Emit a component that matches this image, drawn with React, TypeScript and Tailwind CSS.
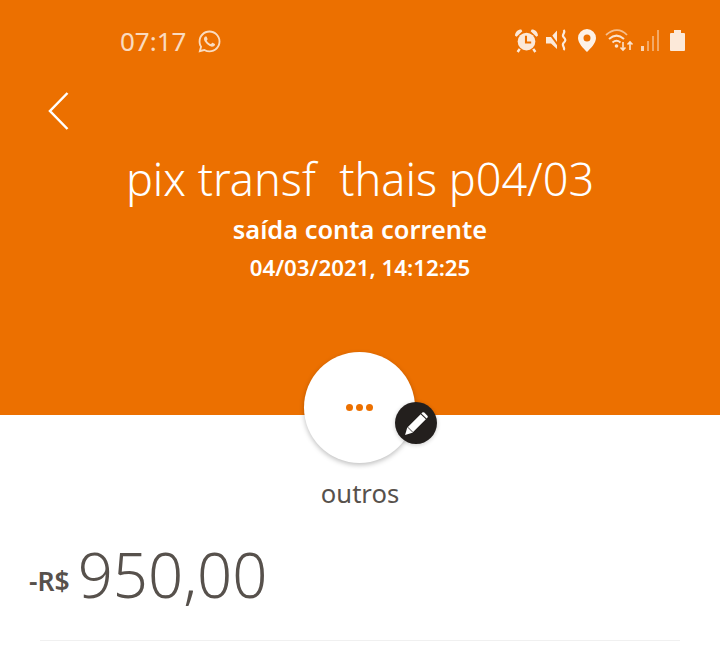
import { FaWhatsapp } from "react-icons/fa";

function StatusIcons() {
  return (
    <div className="mb-[2px] flex items-center">
      {/* alarm */}
      <svg width="25" height="25" viewBox="0 0 24 24" className="opacity-85">
        <circle cx="12" cy="13" r="8.500" fill="#fff" />
        <path d="M1 7.500C1 4 3.500 1.500 7 1.500l1 1.500-5.500 5.500zM23 7.500C23 4 20.500 1.500 17 1.500l-1 1.500 5.500 5.500z" fill="#fff" />
        <path d="M5.500 20l-2 3M18.500 20l2 3" stroke="#fff" strokeWidth="2.400" />
        <path d="M11.500 7.500v6.500h5" stroke="#ec7000" strokeWidth="2" fill="none" />
      </svg>
      {/* vibrate / mute */}
      <svg width="24" height="24" viewBox="0 0 24 24" className="ml-[6px] opacity-85">
        <path d="M1 9h5l6-6.500V21l-6-5.500H1z" fill="#fff" />
        <path d="M2 2l14 19" stroke="#ec7000" strokeWidth="2" />
        <path d="M18.500 2c3 2.500-2.500 4.500 0 7s2.500 3.500 0 6 2.500 5 0 7" stroke="#fff" strokeWidth="2.200" fill="none" />
      </svg>
      {/* location */}
      <svg width="18" height="23" viewBox="0 0 18 23" className="ml-[9px] opacity-90">
        <path fillRule="evenodd" fill="#fff" d="M9 0a9 9 0 0 1 9 9c0 5-5 10-9 14C5 19 0 14 0 9a9 9 0 0 1 9-9zm0 5.500a3.500 3.500 0 1 0 0 7 3.500 3.500 0 0 0 0-7z" />
      </svg>
      {/* wifi with arrows */}
      <svg width="29" height="24" viewBox="0 0 29 24" fill="none" className="ml-[9px]">
        <path d="M1 7c7-6.500 15-6.500 21 0" stroke="#fff" strokeWidth="1.800" opacity="0.55" />
        <path d="M4 11c5-4.500 10-4.500 15 0M7.500 14.500c3-2.500 5-2.500 8 0" stroke="#fff" strokeWidth="2" opacity="0.8" />
        <circle cx="11.500" cy="18" r="1.800" fill="#fff" opacity="0.8" />
        <path d="M18 14v8M15.500 19.500l2.500 2.500 2.500-2.500M25 22v-8M22.500 16.500l2.500-2.500 2.500 2.500" stroke="#fff" strokeWidth="1.600" opacity="0.8" />
      </svg>
      {/* signal */}
      <div className="ml-[7px] flex h-[21px] items-end gap-[3px]">
        <div className="h-[5px] w-[3px] bg-white opacity-70" />
        <div className="h-[10px] w-[2px] bg-white opacity-40" />
        <div className="h-[15px] w-[2px] bg-white opacity-40" />
        <div className="h-[21px] w-[2px] bg-white opacity-40" />
      </div>
      {/* battery */}
      <div className="ml-[11px] flex flex-col items-center opacity-85">
        <div className="h-[3px] w-[7px] bg-white" />
        <div className="h-[18px] w-[15px] rounded-[1px] bg-white" />
      </div>
    </div>
  );
}

export default function App() {
  return (
    <div className="h-[665px] w-[720px] overflow-hidden bg-white font-['Noto_Sans',sans-serif]">
      <div className="relative h-[415px] bg-[#ec7000] text-white">
        <div className="flex h-[82px] items-center justify-between pl-[120px] pr-[35px]">
          <div className="flex items-center gap-[11px] text-[26px] opacity-75">
            <span>07:17</span>
            <FaWhatsapp size={25} />
          </div>
          <StatusIcons />
        </div>
        <div className="pl-[47px] pt-[9px]">
          <svg width="23" height="40" viewBox="0 0 23 40" fill="none" stroke="#fff" strokeWidth="2.500">
            <path d="M20.500 2L3 20l17.500 18" />
          </svg>
        </div>
        <div className="mt-[20px] text-center text-[45px] font-light leading-[56px]">pix transf&nbsp; thais p04/03</div>
        <div className="mt-[5px] text-center text-[25.400px] font-semibold leading-[34px]">saída conta corrente</div>
        <div className="mt-[8px] text-center text-[22.300px] font-semibold leading-[28px]">04/03/2021, 14:12:25</div>
        <div className="absolute left-[304px] top-[352px] flex h-[111px] w-[111px] items-center justify-center gap-[3px] rounded-full bg-white shadow-[0_2px_5px_rgba(0,0,0,0.25)]">
          <span className="h-[7px] w-[7px] rounded-full bg-[#ec7000]" />
          <span className="h-[7px] w-[7px] rounded-full bg-[#ec7000]" />
          <span className="h-[7px] w-[7px] rounded-full bg-[#ec7000]" />
        </div>
        <div className="absolute left-[395px] top-[402px] flex h-[42px] w-[42px] items-center justify-center rounded-full bg-[#231f1d] shadow-[0_1px_4px_rgba(0,0,0,0.2)]">
          <svg width="27" height="27" viewBox="0 0 26 26">
            <path d="M2 24l2-7L17 4l5 5L9 22z" fill="#fff" />
            <path d="M18.500 2.500a1.500 1.500 0 0 1 2 0l3 3a1.500 1.500 0 0 1 0 2l-.8.8-5-5z" fill="#fff" />
            <path d="M4.500 16.500l5 5" stroke="#231f1d" strokeWidth="0.800" />
          </svg>
        </div>
      </div>
      <div className="mt-[62px] text-center text-[25.600px] leading-[34px] text-[#57514c]">outros</div>
      <div className="mt-[27px] flex items-end pl-[29px] text-[#57514c]">
        <span className="mb-[11px] text-[26.500px] font-semibold leading-[36px]">-R$</span>
        <span className="ml-[8px] text-[61.600px] font-light leading-[72px]">950,00</span>
      </div>
      <div className="mx-[40px] mt-[30px] h-px bg-[#f0f0f0]" />
    </div>
  );
}
